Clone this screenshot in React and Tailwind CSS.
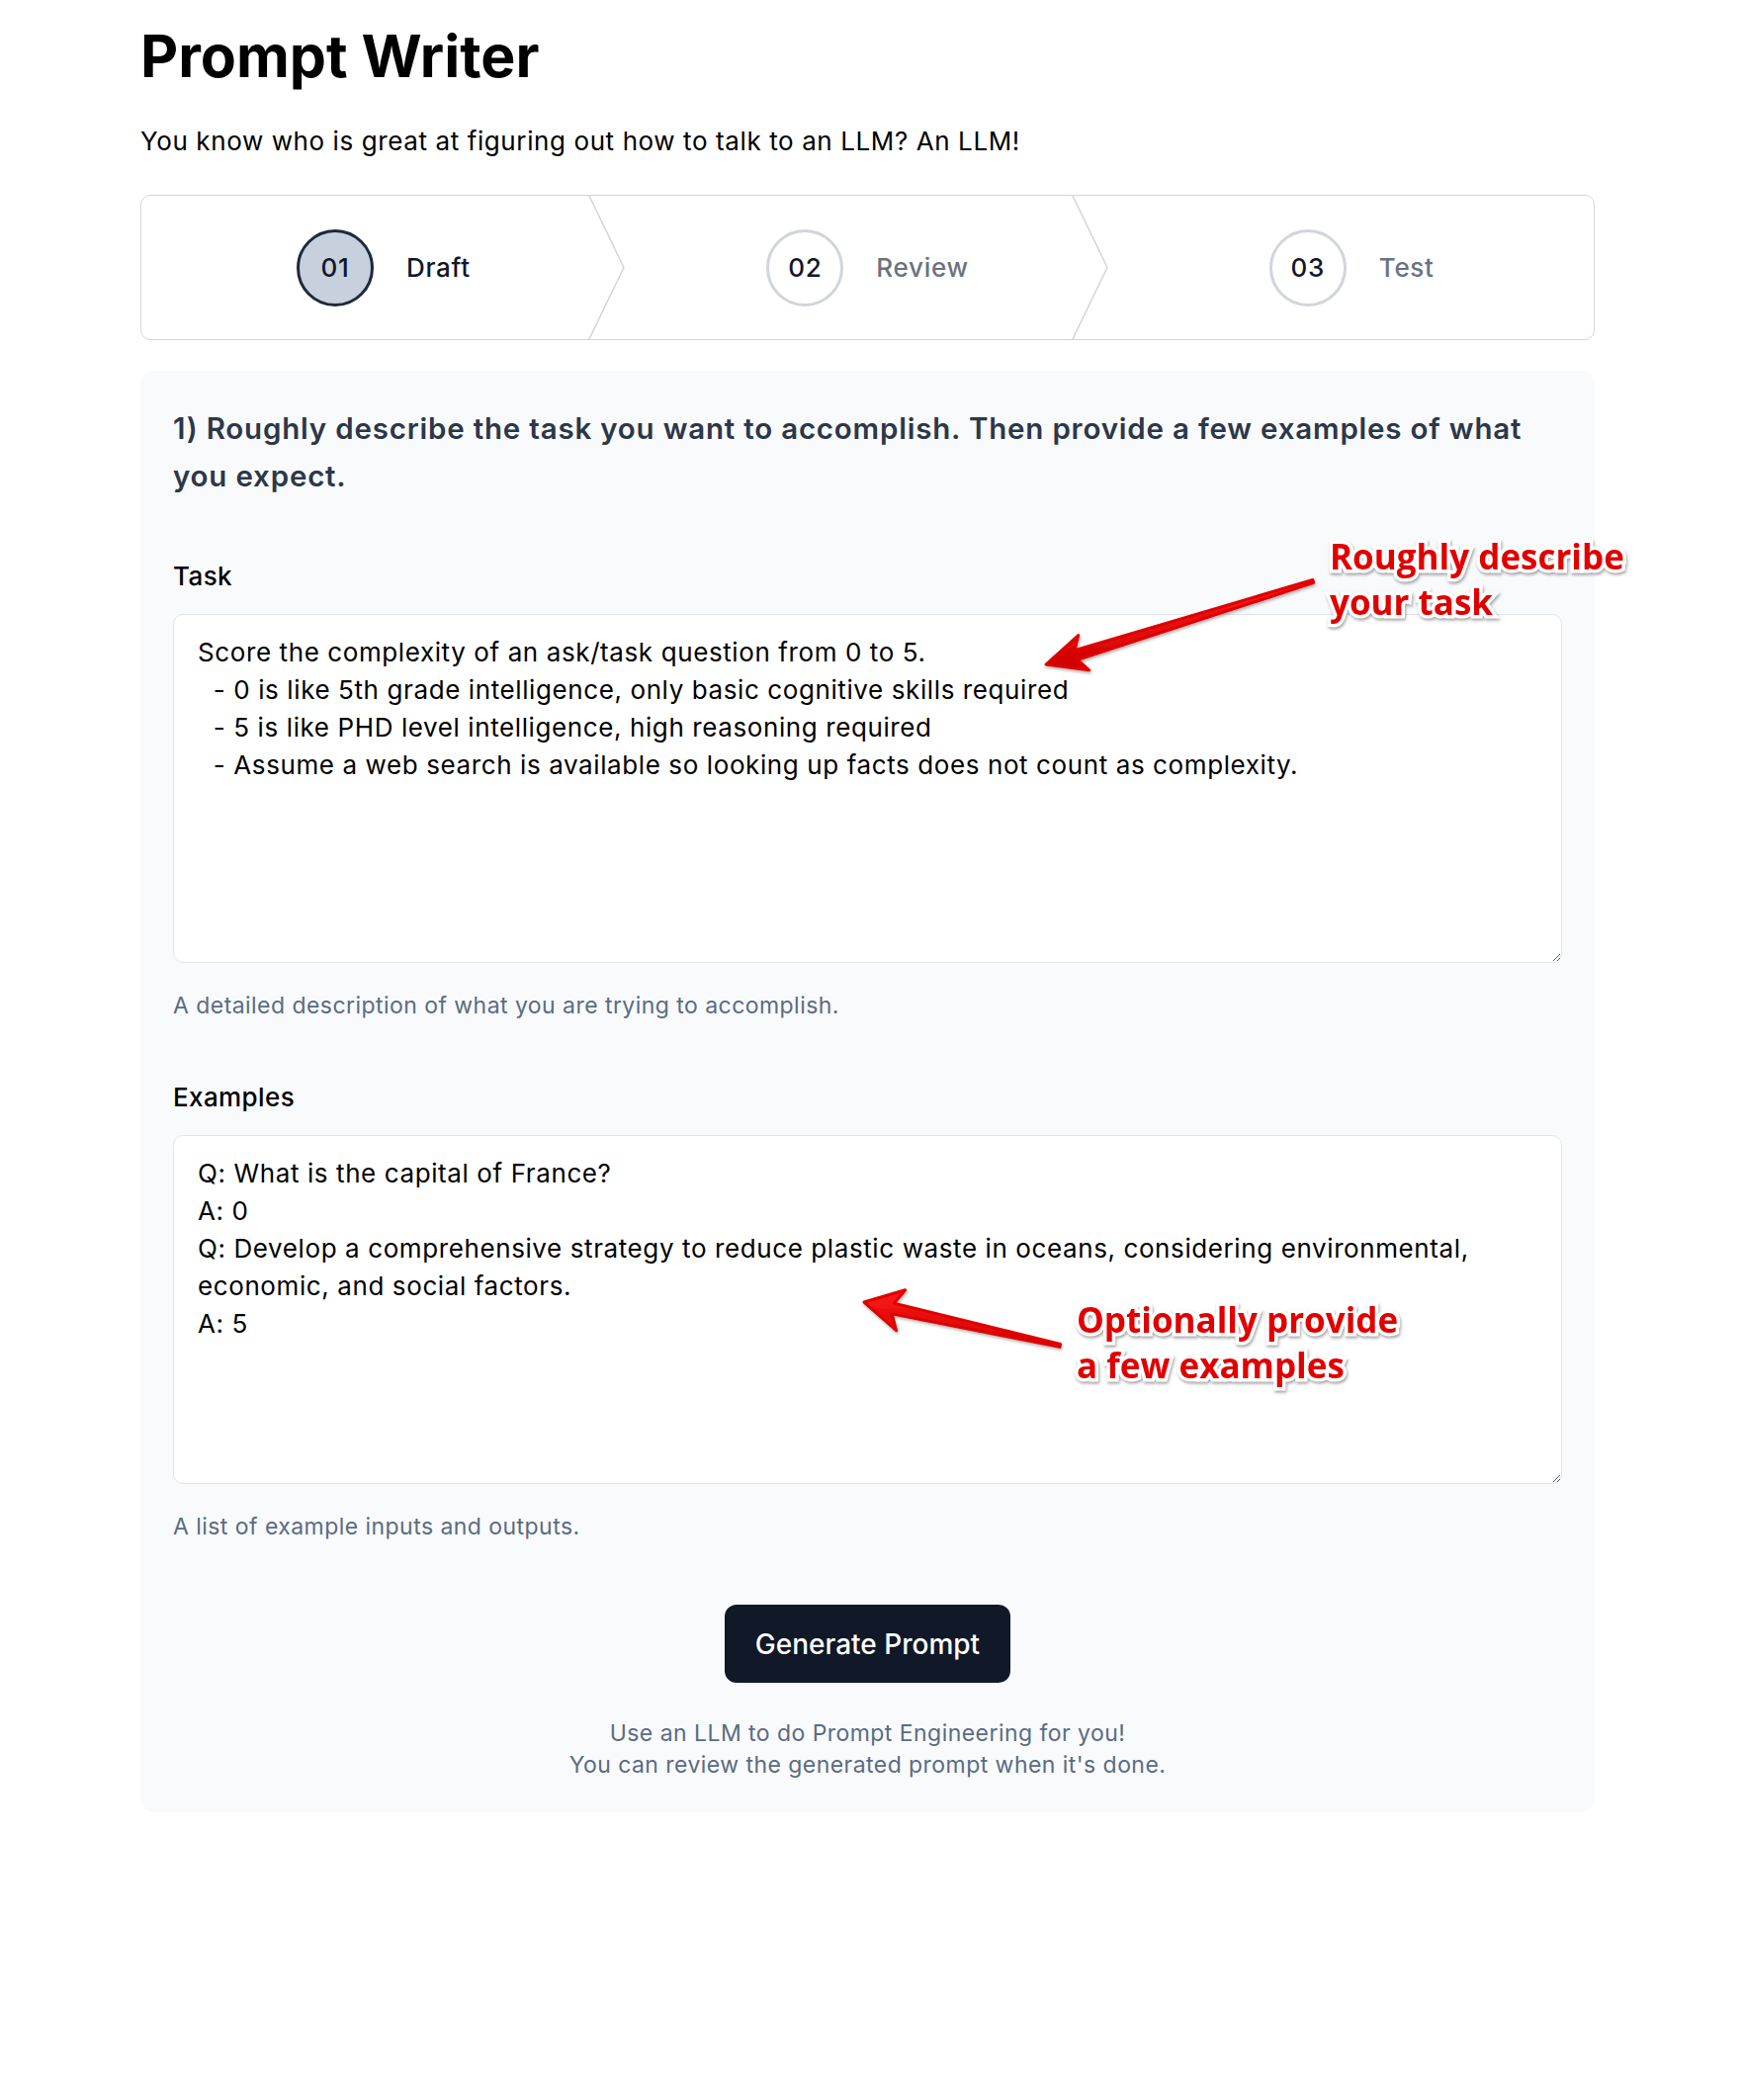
import React from 'react';

const steps = [
  { num: '01', label: 'Draft', active: true },
  { num: '02', label: 'Review', active: false },
  { num: '03', label: 'Test', active: false },
];

const taskText = `Score the complexity of an ask/task question from 0 to 5.
  - 0 is like 5th grade intelligence, only basic cognitive skills required
  - 5 is like PHD level intelligence, high reasoning required
  - Assume a web search is available so looking up facts does not count as complexity.`;

const examplesText = `Q: What is the capital of France?
A: 0
Q: Develop a comprehensive strategy to reduce plastic waste in oceans, considering environmental, economic, and social factors.
A: 5`;

const Stepper = () => (
  <ol className="mt-[35px] flex h-[147px] rounded-[10px] border border-[#d1d5db] bg-white">
    {steps.map((step, i) => (
      <li key={step.num} className="relative flex flex-1 items-center justify-center">
        <div className="flex items-center">
          {step.active ? (
            <span className="flex h-[78px] w-[78px] items-center justify-center rounded-full border-[3px] border-[#1e293b] bg-[#c6d1dd] text-[26px] tracking-[0.6px] font-medium text-[#111827]">
              {step.num}
            </span>
          ) : (
            <span className="flex h-[78px] w-[78px] items-center justify-center rounded-full border-[3px] border-[#d1d5db] bg-white text-[26px] tracking-[0.6px] font-medium text-[#111827]">
              {step.num}
            </span>
          )}
          <span
            className={
              step.active
                ? 'ml-[33px] text-[26px] tracking-[0.7px] font-medium text-[#111827]'
                : 'ml-[33px] text-[26px] tracking-[0.7px] font-medium text-[#6b7280]'
            }
          >
            {step.label}
          </span>
        </div>
        {i < steps.length - 1 && (
          <svg
            className="absolute right-0 top-0 h-full w-[38px] text-[#d1d5db]"
            viewBox="0 0 38 145"
            fill="none"
            preserveAspectRatio="none"
          >
            <path d="M0 -2L36 72.5L0 147" stroke="currentColor" strokeWidth="1.5" strokeLinejoin="round" />
          </svg>
        )}
      </li>
    ))}
  </ol>
);

const Field = ({ label, value, help, className }) => (
  <div className={className}>
    <label className="block text-[26px] leading-[38px] tracking-[0.4px] font-medium text-black">{label}</label>
    <textarea
      defaultValue={value}
      spellCheck={false}
      className="mt-[19px] block h-[353px] w-full resize-y rounded-[10px] border border-[#dfe5ee] bg-white px-[24px] pt-[19px] pb-[21px] text-[26px] leading-[38px] tracking-[0.6px] text-black outline-none [font-family:Inter,sans-serif]"
    />
    <p className="mt-[27px] text-[23px] leading-[32px] tracking-[0.45px] text-[#5b6b82]">{help}</p>
  </div>
);

const annotationClass =
  "absolute [font-family:'Open_Sans',sans-serif] font-bold text-[35px] leading-[46px] text-[#e00000] [paint-order:stroke_fill] [-webkit-text-stroke:7px_white] [filter:drop-shadow(1px_2px_1.5px_rgba(0,0,0,0.35))]";

const Arrows = () => (
  <svg className="pointer-events-none absolute left-0 top-0 h-[2124px] w-[1762px]" viewBox="0 0 1762 2124">
    <defs>
      <linearGradient id="redArrow" x1="0" y1="0" x2="0" y2="1">
        <stop offset="0" stopColor="#ff1a1a" />
        <stop offset="1" stopColor="#cc0000" />
      </linearGradient>
      <filter id="arrowShadow" x="-10%" y="-10%" width="120%" height="130%">
        <feDropShadow dx="1" dy="2" stdDeviation="1.5" floodColor="#000" floodOpacity="0.3" />
      </filter>
    </defs>
    <polygon
      points="1058,672 1090.7,642.5 1087.1,657.7 1327.8,586.5 1328.6,589.4 1090,667.3 1101.7,677.8"
      fill="url(#redArrow)"
      stroke="#e00000"
      strokeWidth="3"
      strokeLinejoin="round"
      filter="url(#arrowShadow)"
    />
    <polygon
      points="874,1317 915.6,1304.7 904.5,1318.1 1072.5,1359.4 1071.9,1362.4 902.1,1328.9 906.6,1345.7"
      fill="url(#redArrow)"
      stroke="#e00000"
      strokeWidth="3"
      strokeLinejoin="round"
      filter="url(#arrowShadow)"
    />
  </svg>
);

const App = () => {
  return (
    <div className="relative min-h-[2124px] bg-white pl-[142px] pr-[149px] pt-[25px] text-black [font-family:Inter,sans-serif]">
      <h1 className="text-[59px] leading-[64px] font-bold text-black">Prompt Writer</h1>
      <p className="mt-[35px] text-[26px] leading-[38px] tracking-[0.6px] text-black">
        You know who is great at figuring out how to talk to an LLM? An LLM!
      </p>

      <Stepper />

      {/* Draft form */}
      <section className="mt-[31px] rounded-[14px] bg-[#f8fafc] px-[33px] pt-[34px] pb-[32px]">
        <h2 className="text-[29.5px] leading-[48px] tracking-[0.8px] font-semibold text-[#2d3748]">
          1) Roughly describe the task you want to accomplish. Then provide a few examples of what you expect.
        </h2>

        <Field
          className="mt-[59px]"
          label="Task"
          value={taskText}
          help="A detailed description of what you are trying to accomplish."
        />
        <Field
          className="mt-[58px]"
          label="Examples"
          value={examplesText}
          help="A list of example inputs and outputs."
        />

        <div className="mt-[63px] flex justify-center">
          <button className="h-[79px] w-[289px] rounded-[12px] bg-[#111827] text-[28px] font-medium text-white">
            Generate Prompt
          </button>
        </div>
        <p className="mt-[35px] text-center text-[23px] leading-[32px] tracking-[0.45px] text-[#5b6b82]">
          Use an LLM to do Prompt Engineering for you!
          <br />
          You can review the generated prompt when it's done.
        </p>
      </section>

      <Arrows />
      <div className={`${annotationClass} left-[1345px] top-[540px]`}>
        Roughly describe
        <br />
        your task
      </div>
      <div className={`${annotationClass} left-[1089px] top-[1312px]`}>
        Optionally provide
        <br />
        a few examples
      </div>
    </div>
  );
};

export default App;
